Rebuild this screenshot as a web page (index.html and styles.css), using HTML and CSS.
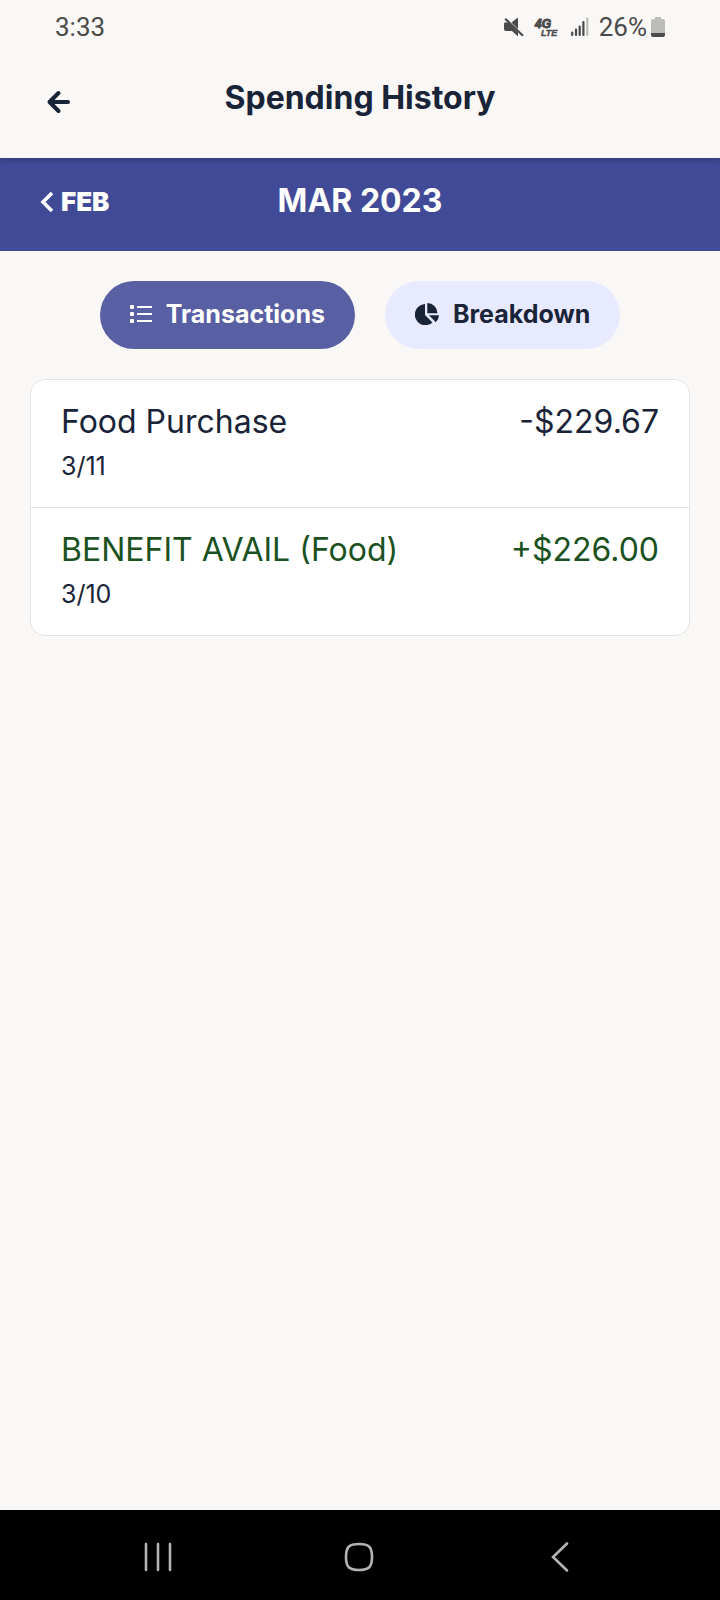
FILE: index.html
```html
<!DOCTYPE html>
<html lang="en">
<head>
<meta charset="utf-8">
<meta name="viewport" content="width=device-width, initial-scale=1">
<title>Spending History</title>
<link rel="stylesheet" href="styles.css">
</head>
<body>
<div class="status">
  <time class="status-time">3:33</time>
  <div class="status-icons">
    <svg class="mute" width="20" height="20" viewBox="0 0 20 20" aria-hidden="true"><path d="M0 6.500q0-1 1-1h3.500L14 15.500v4L8 14H2q-2 0-2-2zM7.500 5.500L14 .5v11.500z" fill="#4a4a4a"/><path d="M1.200 1.800L19 18.800" stroke="#4a4a4a" stroke-width="2.200"/></svg>
    <svg class="network" width="24" height="20" viewBox="0 0 24 20" role="img" aria-label="4G LTE"><text class="network-4g" x="0" y="11">4G</text><text class="network-lte" x="6" y="19">LTE</text></svg>
    <svg class="signal" width="18" height="20" viewBox="0 0 18 20" stroke-width="2.200" stroke-linecap="round" stroke="#4a4a4a" aria-hidden="true"><path d="M1.200 15.500v2.500M5 12.500V18M8.700 9.500V18M12.400 5V18"/><path d="M16.300 1.500V18" stroke="#bcbcba"/></svg>
    <span class="percent">26%</span>
    <svg class="battery" width="14" height="22" viewBox="0 0 14 22" aria-hidden="true"><path d="M4 1h6v2h2q2 0 2 2v12H0V5q0-2 2-2h2z" fill="#bcbcba"/><path d="M0 17h14v2q0 2-2 2H2q-2 0-2-2z" fill="#4a4a4a"/></svg>
  </div>
</div>

<header class="header">
  <button class="back" type="button" aria-label="Back"><svg width="24" height="24" viewBox="0 0 24 24" fill="none" stroke="#1a2438" stroke-width="4" stroke-linecap="round" stroke-linejoin="round"><path d="M12.500 3L3.500 12l9 9M3.500 12H22"/></svg></button>
  <h1 class="title">Spending History</h1>
</header>

<main class="main">
  <nav class="months" aria-label="Month">
    <button class="previous" type="button"><svg width="14" height="20" viewBox="0 0 14 20" fill="none" stroke="#fff" stroke-width="3.600"><path d="M12 1L3 10l9 9"/></svg>FEB</button>
    <h2 class="month">MAR 2023</h2>
  </nav>

  <div class="tabs">
    <button class="tab tab-active" type="button" aria-pressed="true"><svg width="22" height="18" viewBox="0 0 22 18" fill="#fff" aria-hidden="true"><rect width="4" height="4" rx="1"/><rect y="7" width="4" height="4" rx="1"/><rect y="14" width="4" height="4" rx="1"/><path d="M7 1h15v2H7zM7 8h15v2H7zM7 15h15v2H7z"/></svg>Transactions</button>
    <button class="tab" type="button" aria-pressed="false"><svg class="pie" width="24" height="22" viewBox="0 0 24 22" fill="#1a2438" aria-hidden="true"><path d="M10 1v11l7.500 7.500A10.600 10.600 0 1 1 10 1zM12.300 0A10.500 10.500 0 0 1 22.500 10.300H12.300zM14 12.200h10a10 10 0 0 1-3.200 7z"/></svg>Breakdown</button>
  </div>

  <ul class="transactions">
    <li class="transaction">
      <span class="name">Food Purchase</span>
      <span class="amount">-$229.67</span>
      <time class="date">3/11</time>
    </li>
    <li class="transaction transaction-credit">
      <span class="name">BENEFIT AVAIL (Food)</span>
      <span class="amount">+$226.00</span>
      <time class="date">3/10</time>
    </li>
  </ul>
</main>

<nav class="system" aria-label="System">
  <button type="button" aria-label="Recent apps"><svg width="28" height="30" viewBox="0 0 28 30" fill="none" stroke="#b4b4b4" stroke-width="2.600" stroke-linecap="round"><path d="M2 2v26M14 2v26M26 2v26"/></svg></button>
  <button type="button" aria-label="Home"><svg width="30" height="30" viewBox="0 0 30 30" fill="none" stroke="#b4b4b4" stroke-width="2.600"><path d="M15 2c10 0 13 3 13 13s-3 13-13 13S2 25 2 15 5 2 15 2z"/></svg></button>
  <button type="button" aria-label="Back"><svg width="18" height="30" viewBox="0 0 18 30" fill="none" stroke="#b4b4b4" stroke-width="2.600" stroke-linecap="round"><path d="M16 1.500L2 15l14 13.500"/></svg></button>
</nav>
</body>
</html>
```
FILE: styles.css
```css
* {
  box-sizing: border-box;
}

body {
  margin: 0;
  min-height: 100vh;
  display: flex;
  flex-direction: column;
  background: #f9f8f6;
  color: #1a2438;
  font-family: Inter, "Liberation Sans", sans-serif;
}

button {
  padding: 0;
  border: 0;
  background: none;
  color: inherit;
  font: inherit;
  cursor: pointer;
}

svg {
  flex: none;
}

.status {
  display: flex;
  justify-content: space-between;
  align-items: center;
  height: 54px;
  padding: 0 55px;
  color: #4a4a4a;
  font: 26px/54px Roboto, sans-serif;
}

.status-icons {
  display: flex;
  align-items: center;
}

.network {
  margin-left: 11px;
  overflow: visible;
  fill: #4a4a4a;
  stroke: #4a4a4a;
  font-family: "Liberation Sans", sans-serif;
  font-weight: 700;
  font-style: italic;
}

.network-4g {
  font-size: 12px;
}

.network-lte {
  font-size: 9px;
  stroke-width: 0.4;
}

.signal {
  margin-left: 12px;
}

.percent {
  margin-left: 10px;
}

.battery {
  margin-left: 4px;
}

.header {
  position: relative;
  z-index: 1;
  display: grid;
  grid-template-columns: 1fr auto 1fr;
  height: 104px;
  padding: 25px 46px 0;
  background: #f9f8f6;
  box-shadow: 0 1px 7px rgba(0, 0, 0, 0.3);
  clip-path: inset(0 0 -12px 0);
}

.back {
  justify-self: start;
  display: flex;
  align-items: center;
  height: 46px;
}

.title,
.month {
  margin: 0;
  font-size: 32px;
  line-height: 38px;
  font-weight: 700;
}

.main {
  flex: 1;
}

.months {
  display: grid;
  grid-template-columns: 1fr auto 1fr;
  align-items: baseline;
  height: 93px;
  padding: 24px 40px 0;
  background: #414a97;
  color: #fff;
}

.previous {
  justify-self: start;
  display: flex;
  align-items: center;
  gap: 7px;
  font-size: 26px;
  line-height: 36px;
  font-weight: 900;
}

.tabs {
  display: flex;
  justify-content: center;
  gap: 30px;
  padding: 30px;
}

.tab {
  display: flex;
  align-items: center;
  gap: 14px;
  height: 68px;
  padding: 0 30px 3px;
  border-radius: 34px;
  background: #e8eaff;
  font-size: 25px;
  font-weight: 700;
}

.tab-active {
  background: #585fa3;
  color: #fff;
}

.transactions {
  margin: 0 30px;
  padding: 0;
  list-style: none;
  border: 1px solid #e5e4e2;
  border-radius: 15px;
  background: #fff;
}

.transaction {
  display: grid;
  grid-template-columns: 1fr auto;
  row-gap: 7px;
  padding: 21px 30px 25px;
}

.transaction + .transaction {
  border-top: 1px solid #e5e4e2;
}

.name,
.amount {
  font-size: 32px;
  line-height: 42px;
}

.transaction-credit .name,
.transaction-credit .amount {
  color: #1b511f;
}

.date {
  font-size: 25px;
  line-height: 32px;
}

.system {
  display: grid;
  grid-template-columns: repeat(3, 1fr);
  height: 90px;
  padding: 4px 59px 0 57px;
  background: #000;
}

.system button {
  display: flex;
  align-items: center;
  justify-content: center;
}
```
